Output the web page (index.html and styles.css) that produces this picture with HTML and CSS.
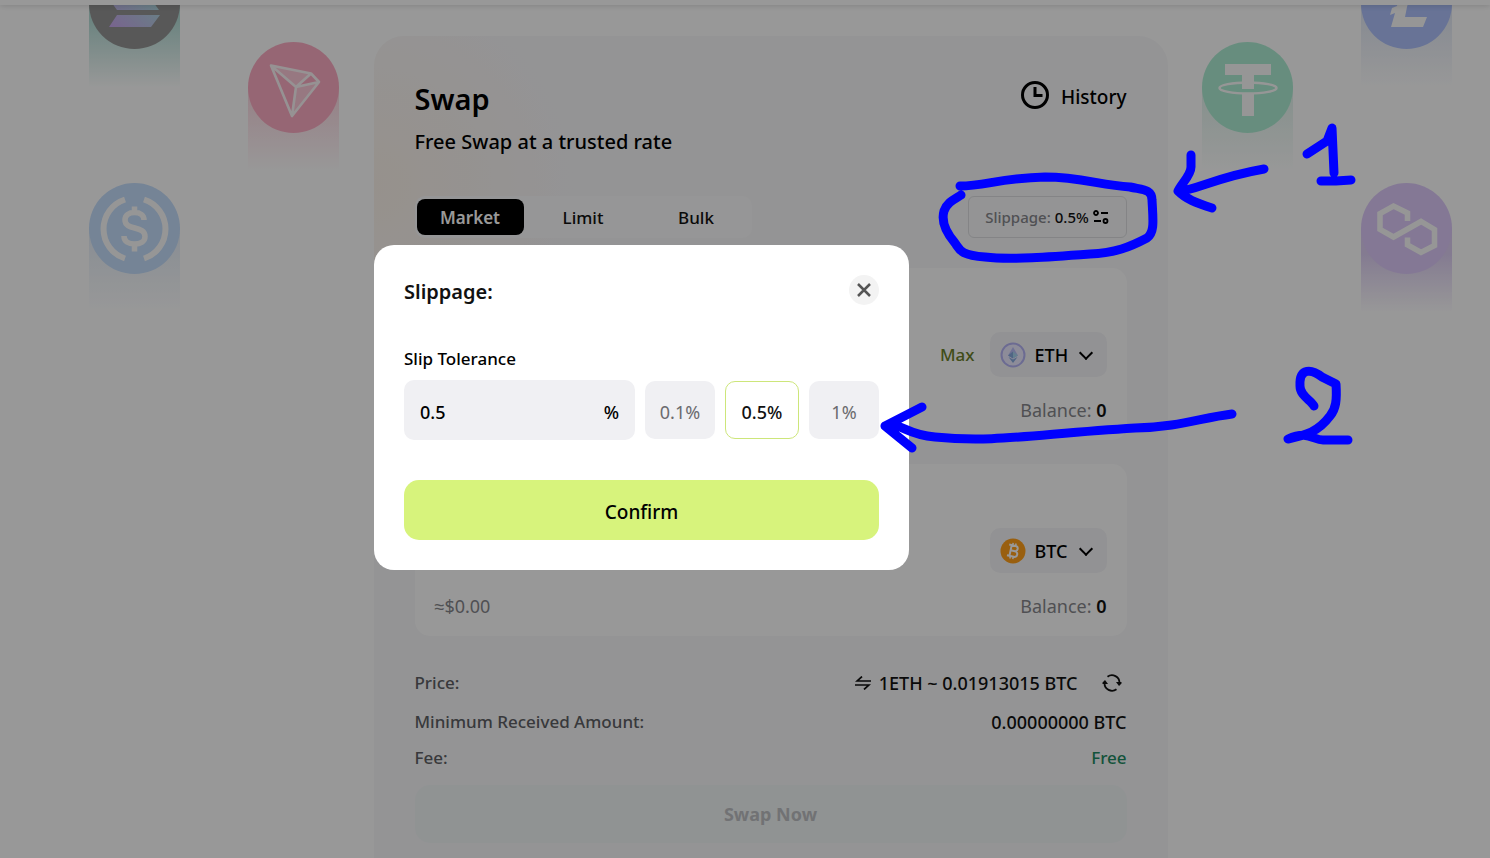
FILE: index.html
```
<!DOCTYPE html>
<html lang="en">
<head>
  <meta charset="UTF-8">
  <meta name="viewport" content="width=device-width, initial-scale=1.0">
  <title>Swap</title>
  <link rel="stylesheet" href="styles.css">
</head>
<body>

<header class="topbar"></header>

<main class="page">
  <!-- Left coins -->
  <div class="coins">
    <div class="coin coin-sol">
      <svg viewBox="0 0 91 91">
        <defs>
          <linearGradient id="sol" x1="0" y1="1" x2="1" y2="0">
            <stop offset="0" stop-color="#c9a6ee"/>
            <stop offset="1" stop-color="#a3ead8"/>
          </linearGradient>
        </defs>
        <circle cx="45.5" cy="45.5" r="45.5" fill="#939393"/>
        <path d="M28 24h42l-8 11H20zM20 41h42l8 11H28zM28 57h43l-9 12H20z" fill="url(#sol)"/>
      </svg>
    </div>
    <div class="coin coin-trx">
      <svg viewBox="0 0 91 91">
        <circle cx="45.5" cy="45.5" r="45.5" fill="#fbabc2"/>
        <path d="M23 24l40 8-15 12zM48 46l22-6-26 33z" fill="#fff" opacity=".35"/>
        <path d="M23 23.500l40 8 8 8.500-27 34zM23 23.500l25 21.500 15-13.500M48 45l23-5M48 45l-4 29" fill="none" stroke="#fbf4f6" stroke-width="2.600" stroke-linejoin="round"/>
      </svg>
    </div>
    <div class="coin coin-usdc">
      <svg viewBox="0 0 91 91">
        <circle cx="45.500" cy="45.500" r="45.500" fill="#c3dcfa"/>
        <path d="M36 16.500a31 31 0 0 0 0 59M55 16.500a31 31 0 0 1 0 59" fill="none" stroke="#fbfbfb" stroke-width="6"/>
        <path d="M55 37c0-5-4-7.500-9.500-7.500S36 32 36 37c0 11 20 5 20 16.500 0 5-4.500 7.500-10.500 7.500S35 58.500 35 53M45.500 23.500V31M45.500 60v8.500" fill="none" stroke="#fbfbfb" stroke-width="5.500"/>
      </svg>
    </div>
  </div>

  <!-- Swap card -->
  <section class="card">
    <div class="card-head">
      <div>
        <h1>Swap</h1>
        <p class="subtitle">Free Swap at a trusted rate</p>
      </div>
      <a class="history" href="#history">
        <svg width="28" height="28" viewBox="0 0 28 28" fill="none" stroke="#000" stroke-width="3">
          <circle cx="14" cy="14" r="12.500"/>
          <path d="M14 6v8.500h7.500"/>
        </svg>
        History
      </a>
    </div>

    <div class="toolbar">
      <div class="tabs">
        <button type="button" class="tab active">Market</button>
        <button type="button" class="tab">Limit</button>
        <button type="button" class="tab">Bulk</button>
      </div>
      <button type="button" class="slippage">
        <span>Slippage:</span> 0.5%
        <svg width="16" height="14" viewBox="0 0 16 14" fill="none" stroke="#000" stroke-width="1.800">
          <circle cx="3" cy="3" r="2"/>
          <path d="M8 3h7M1 11h7"/>
          <circle cx="12.500" cy="11" r="2"/>
        </svg>
      </button>
    </div>

    <div class="panel">
      <div class="panel-main">
        <button type="button" class="max">Max</button>
        <label class="token">
          <svg width="26" height="26" viewBox="0 0 26 26">
            <circle cx="13" cy="13" r="11.500" fill="#eceaff" stroke="#b4b3f4" stroke-width="2"/>
            <path d="M13 5l5 8.500-5 3-5-3z" fill="#b9bdf7"/>
            <path d="M13 9.500v7l-5-3zM8.500 15l4.500 2.500 4.500-2.500L13 21z" fill="#86a9dc"/>
            <path d="M13 9.500v7l5-3z" fill="#a7d4ee"/>
          </svg>
          <select aria-label="Pay with">
            <option>ETH</option>
            <option>BTC</option>
          </select>
        </label>
      </div>
      <div class="panel-foot">
        <span></span>
        <span>Balance: <b>0</b></span>
      </div>
    </div>

    <div class="panel">
      <div class="panel-main">
        <label class="token">
          <svg width="26" height="26" viewBox="0 0 26 26">
            <circle cx="13" cy="13" r="12.500" fill="#ff9f1a"/>
            <g transform="rotate(12 13 13)" fill="none" stroke="#fff" stroke-width="2">
              <path d="M8 7.500h6.500a2.600 2.600 0 0 1 0 5.300H10.500M10.500 12.800h4.500a2.800 2.800 0 0 1 0 5.700H8M10.500 7.500v11"/>
              <path d="M11.500 5v2.500M14.500 5v2.500M11.500 18.500V21M14.500 18.500V21" stroke-width="1.500"/>
            </g>
          </svg>
          <select aria-label="Receive">
            <option>BTC</option>
            <option>ETH</option>
          </select>
        </label>
      </div>
      <div class="panel-foot">
        <span>≈$0.00</span>
        <span>Balance: <b>0</b></span>
      </div>
    </div>

    <dl class="info">
      <div class="info-row">
        <dt>Price:</dt>
        <dd>
          <svg width="16" height="14" viewBox="0 0 16 14" fill="none" stroke="#111" stroke-width="1.700">
            <path d="M16 5H2l5-4.500M0 9h14l-5 4.500"/>
          </svg>
          1ETH ~ 0.01913015 BTC
          <button type="button" class="refresh" aria-label="Refresh price">
            <svg width="20" height="20" viewBox="0 0 20 20">
              <path d="M5.500 3.800A7.500 7.500 0 0 1 17.500 10M14.500 16.200A7.500 7.500 0 0 1 2.500 10" fill="none" stroke="#111" stroke-width="1.800"/>
              <path d="M14 9h5.500v1.500L17 13zM6 11H.5V9.500L3 7z" fill="#111"/>
            </svg>
          </button>
        </dd>
      </div>
      <div class="info-row">
        <dt>Minimum Received Amount:</dt>
        <dd>0.00000000 BTC</dd>
      </div>
      <div class="info-row">
        <dt>Fee:</dt>
        <dd class="free">Free</dd>
      </div>
    </dl>

    <button type="button" class="swap-now" disabled>Swap Now</button>
  </section>

  <!-- Right coins -->
  <div class="coins">
    <div class="coin coin-ltc">
      <svg viewBox="0 0 91 91">
        <circle cx="45.500" cy="45.500" r="45.500" fill="#adc0fa"/>
        <path d="M41 18h13l-8 31-2 10h22l-4 10H30l4-14-5 2 2-7 5-2z" fill="#fbfbfb"/>
      </svg>
    </div>
    <div class="coin coin-usdt">
      <svg viewBox="0 0 91 91">
        <circle cx="45.500" cy="45.500" r="45.500" fill="#acecd2"/>
        <path d="M23 22h46v11H52v14H40V33H23zM40 51h12v23H40z" fill="#fbfbfb"/>
        <ellipse cx="46" cy="46" rx="28.500" ry="5.500" fill="none" stroke="#fbfbfb" stroke-width="2.500"/>
      </svg>
    </div>
    <div class="coin coin-matic">
      <svg viewBox="0 0 91 91">
        <circle cx="45.500" cy="45.500" r="45.500" fill="#dcc9f8"/>
        <path d="M46.500 38v-8L32.500 23 19 30.500v16L32.500 54 60 38.500 73.500 46.500v16L60 69.500l-13.500-7.500v-7.500" fill="none" stroke="#fbfbfb" stroke-width="5.500"/>
      </svg>
    </div>
  </div>
</main>

<!-- Slippage modal -->
<div class="overlay">
  <form class="modal" role="dialog" aria-labelledby="modal-title">
    <div class="modal-head">
      <h2 id="modal-title">Slippage:</h2>
      <button type="button" class="close" aria-label="Close">
        <svg width="14" height="14" viewBox="0 0 14 14" stroke="#555" stroke-width="2.500">
          <path d="M1 1l12 12M13 1L1 13"/>
        </svg>
      </button>
    </div>
    <label class="field-label" for="tolerance">Slip Tolerance</label>
    <div class="options">
      <div class="field">
        <input type="text" id="tolerance" value="0.5">
        <span>%</span>
      </div>
      <button type="button" class="option">0.1%</button>
      <button type="button" class="option selected">0.5%</button>
      <button type="button" class="option">1%</button>
    </div>
    <button type="button" class="confirm">Confirm</button>
  </form>
</div>

<!-- Hand drawn step markers -->
<svg class="marks" width="1490" height="858" viewBox="0 0 1490 858">
  <path d="M960 186C985 186 1000 178 1045 177C1080 177 1100 185 1130 187C1143 190 1152 189 1152 200C1153 220 1155 232 1147 238C1130 247 1115 253 1090 254C1050 257 1010 260 985 257C960 255 960 250 955 243C943 229 942 218 944 211C947 202 955 199 961 195"/>
  <path d="M1191 155v12c0 8-9 16-13 24 8 8 18 12 34 17M1178 191c18 0 34-13 86-22"/>
  <path d="M1307 154l20-13 5-13 2 45M1321 181h15l15-1"/>
  <path d="M922 407l-37 19 27 22M885 426c20-3 18 8 50 11 60 6 100-3 200-9 45-1 65-10 97-14"/>
  <path d="M1314 406c-3-6-14-10-14-20-1-19 12-17 22-9l14 7c1 16 0 25-6 32-12 16-24 19-42 23 20-9 25 1 35 1h25"/>
</svg>

</body>
</html>
```
FILE: styles.css
```
* {
  box-sizing: border-box;
}

body {
  margin: 0;
  height: 100vh;
  overflow: hidden;
  background-color: #fefefe;
  color: #111;
  font-family: "Noto Sans", sans-serif;
  font-size: 17px;
  font-weight: 500;
  line-height: 24px;
}

h1, h2, p, dl, dd {
  margin: 0;
}

button, input, select {
  font: inherit;
  color: inherit;
  border: 0;
  padding: 0;
  background: none;
}

svg {
  display: block;
}

.topbar {
  position: relative;
  z-index: 1;
  height: 5px;
  background-color: #fefefe;
  box-shadow: 0 0 6px rgba(0, 0, 0, 0.2);
}

.page {
  display: grid;
  grid-template-columns: 1fr minmax(0, 794px) 1fr;
  padding: 0 38px 0 89px;
}

/* Coins */
.coins {
  position: relative;
}

.coin {
  position: absolute;
  width: 91px;
  height: 130px;
}

.coin::before {
  content: "";
  position: absolute;
  inset: 45px 0 0;
}

.coin svg {
  position: relative;
}

.coin-sol {
  top: -47px;
  left: 0;
}

.coin-sol::before {
  background: linear-gradient(#b4dcd6 20%, rgba(180, 220, 214, 0));
}

.coin-trx {
  top: 37px;
  left: 159px;
}

.coin-trx::before {
  background: linear-gradient(#fbd5df, rgba(251, 213, 223, 0));
}

.coin-usdc {
  top: 178px;
  left: 0;
}

.coin-usdc::before {
  background: linear-gradient(#e3ecf6, rgba(227, 236, 246, 0));
}

.coin-ltc {
  top: -47px;
  right: 0;
}

.coin-ltc::before {
  background: linear-gradient(#dde4f2, rgba(221, 228, 242, 0));
}

.coin-usdt {
  top: 37px;
  right: 159px;
}

.coin-usdt::before {
  background: linear-gradient(#def1ea, rgba(222, 241, 234, 0));
}

.coin-matic {
  top: 178px;
  right: 0;
}

.coin-matic::before {
  background: linear-gradient(#dccdf2 30%, rgba(220, 205, 242, 0));
}

/* Card */
.card {
  margin-top: 31px;
  padding: 45px 41px;
  border-radius: 30px;
  background: radial-gradient(circle at 0 150px, #fbf2ea 0, rgba(251, 242, 234, 0) 200px), #f7f7f9;
}

.card-head {
  display: flex;
  justify-content: space-between;
  align-items: flex-start;
  color: #000;
}

h1 {
  font-size: 29px;
  font-weight: 600;
  line-height: 36px;
}

.subtitle {
  margin-top: 11px;
  font-size: 20px;
  line-height: 28px;
}

.history {
  display: flex;
  gap: 12px;
  color: #000;
  font-size: 19px;
  line-height: 32px;
  text-decoration: none;
}

.toolbar {
  display: flex;
  justify-content: space-between;
  margin: 40px 0 30px;
}

.tabs {
  display: flex;
  gap: 6px;
  width: 337px;
  padding: 3px 2px;
  border-radius: 10px;
  background-color: #fbfbfc;
}

.tab {
  flex: 1;
  height: 36px;
  padding-top: 2px;
  border-radius: 8px;
}

.tab.active {
  background-color: #000;
  color: #fff;
  font-weight: 600;
}

.slippage {
  display: flex;
  align-items: center;
  justify-content: center;
  gap: 4px;
  width: 159px;
  height: 42px;
  border: 1px solid #dcdde0;
  border-radius: 6px;
  font-size: 15px;
}

.slippage span {
  color: #85868b;
}

.panel {
  margin-bottom: 24px;
  padding: 64px 20px 18px;
  border-radius: 15px;
  background-color: #fefefe;
}

.panel-main {
  display: flex;
  justify-content: flex-end;
  align-items: center;
  gap: 15px;
}

.max {
  color: #6b7f2a;
}

.token {
  position: relative;
  display: flex;
  align-items: center;
  gap: 9px;
  width: 117px;
  height: 45px;
  padding: 0 10px;
  border-radius: 10px;
  background-color: #f4f4f7;
}

.token select {
  flex: 1;
  appearance: none;
  color: #000;
  font-size: 18px;
}

.token::after {
  content: "";
  width: 8px;
  height: 8px;
  margin: 0 6px 4px 0;
  border: solid #000;
  border-width: 0 2px 2px 0;
  transform: rotate(45deg);
}

.panel-foot {
  display: flex;
  justify-content: space-between;
  margin-top: 21px;
  color: #85868b;
  font-size: 18px;
  font-weight: 400;
}

.panel-foot b {
  color: #111;
  font-weight: 600;
}

.info {
  display: flex;
  flex-direction: column;
  gap: 12px;
  padding-top: 8px;
}

.info-row {
  display: flex;
  justify-content: space-between;
  align-items: center;
}

.info dt {
  color: #5e5f64;
}

.info dd {
  display: flex;
  align-items: center;
  gap: 8px;
  font-size: 18px;
}

.refresh {
  padding: 5px 5px 5px 16px;
}

.info .free {
  color: #1f8a63;
  font-size: 17px;
}

.swap-now {
  width: 100%;
  height: 58px;
  margin-top: 15px;
  border-radius: 15px;
  background-color: #f1f5f6;
  color: #bdbfc2;
  font-size: 18px;
  font-weight: 700;
}

/* Modal */
.overlay {
  position: fixed;
  inset: 0;
  z-index: 10;
  padding: 245px 0 0 374px;
  background-color: rgba(0, 0, 0, 0.4);
}

.modal {
  width: 535px;
  padding: 30px;
  border-radius: 20px;
  background-color: #fff;
}

.modal-head {
  display: flex;
  justify-content: space-between;
  margin-bottom: 38px;
}

h2 {
  font-size: 20px;
  font-weight: 600;
  line-height: 34px;
}

.close {
  display: flex;
  align-items: center;
  justify-content: center;
  width: 30px;
  height: 30px;
  border-radius: 50%;
  background-color: #f3f3f3;
}

.field-label {
  display: block;
  margin-bottom: 9px;
  color: #000;
}

.options {
  display: flex;
  align-items: center;
  gap: 10px;
}

.field {
  display: flex;
  align-items: center;
  flex: 1;
  min-width: 0;
  height: 60px;
  padding: 4px 16px 0;
  border-radius: 10px;
  background-color: #f0f0f3;
  color: #000;
  font-size: 18px;
}

.field input {
  flex: 1;
  min-width: 0;
  outline: none;
}

.option {
  flex: none;
  width: 70px;
  height: 58px;
  padding-top: 4px;
  border-radius: 10px;
  background-color: #f0f0f3;
  color: #6b6b6e;
  font-size: 18px;
  font-weight: 400;
}

.option.selected {
  width: 74px;
  border: 1px solid #cde67a;
  background-color: #fff;
  color: #111;
  font-weight: 500;
}

.confirm {
  width: 100%;
  height: 60px;
  margin-top: 40px;
  padding-top: 4px;
  border-radius: 15px;
  background-color: #d7f37c;
  color: #000;
  font-size: 19px;
}

/* Step markers */
.marks {
  position: fixed;
  top: 0;
  left: 0;
  z-index: 20;
  fill: none;
  stroke: #00f;
  stroke-width: 9;
  stroke-linecap: round;
  stroke-linejoin: round;
  pointer-events: none;
}
```
